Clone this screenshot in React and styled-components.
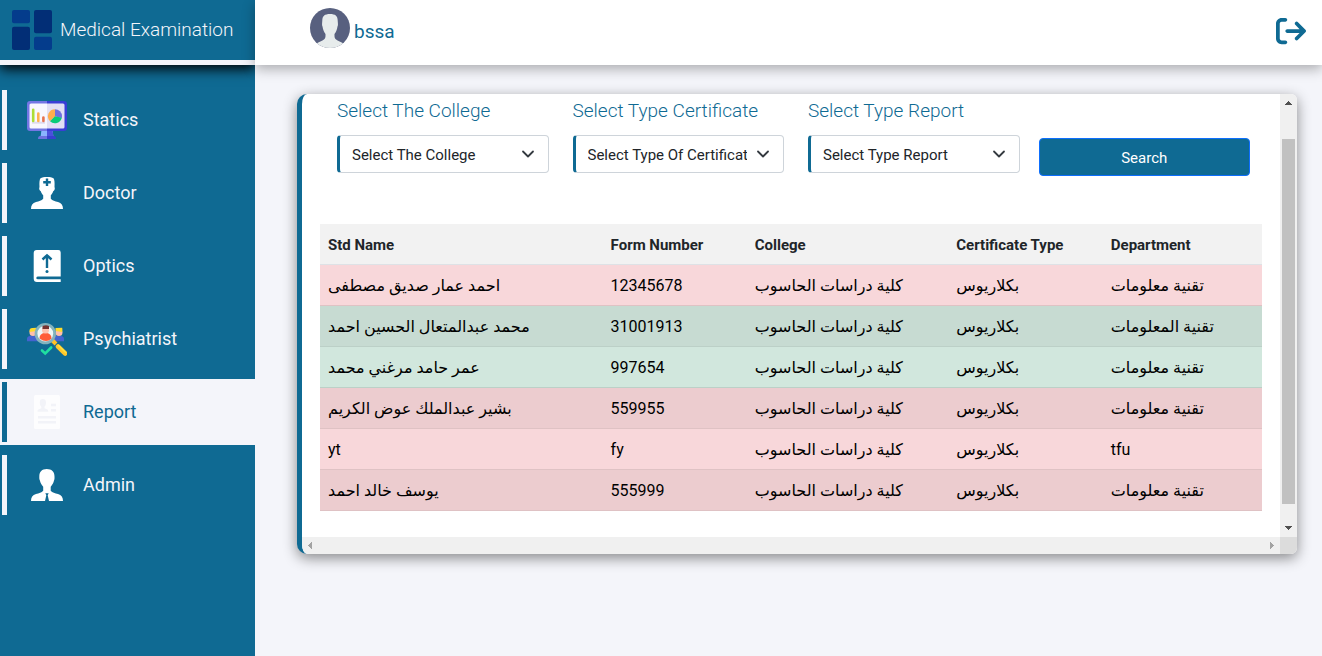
import React from "react";
import styled, { createGlobalStyle } from "styled-components";
import { FaArrowRightFromBracket } from "react-icons/fa6";

const teal = "#0f6a93";
const paper = "#f4f5fa";

const GlobalStyle = createGlobalStyle`
  *, *::before, *::after { box-sizing: border-box; }
  body {
    margin: 0;
    background: ${paper};
    color: #212529;
    font-family: Roboto, "DejaVu Sans", sans-serif;
    font-size: 16px;
    line-height: 24px;
  }
`;

const Page = styled.div`
  display: flex;
  min-height: 100vh;
`;

const Sidebar = styled.aside`
  flex: 0 0 255px;
  background: ${teal};
  overflow: hidden;
`;

const Brand = styled.a`
  display: flex;
  align-items: center;
  gap: 8px;
  height: 65px;
  padding-left: 12px;
  border-bottom: 5px solid ${paper};
  box-shadow: 0 4px 12px #000;
  color: ${paper};
  font-size: 19px;
  font-weight: 300;
  text-decoration: none;
  white-space: nowrap;
`;

const NavList = styled.ul`
  display: flex;
  flex-direction: column;
  gap: 7px;
  margin: 0;
  padding: 22px 0 0;
  list-style: none;
`;

const NavItem = styled.li`
  padding: 3px 0 3px 2px;
  background: ${(p) => (p.$active ? paper : "transparent")};
`;

const NavLink = styled.a`
  display: flex;
  align-items: center;
  gap: 16px;
  height: 60px;
  padding-left: 20px;
  border-left: 5px solid ${(p) => (p.$active ? teal : paper)};
  color: ${(p) => (p.$active ? teal : paper)};
  font-size: 18px;
  text-decoration: none;
`;

const Content = styled.div`
  flex: 1;
  min-width: 0;
`;

const TopBar = styled.header`
  display: flex;
  justify-content: space-between;
  align-items: center;
  height: 65px;
  padding: 0 16px 4px 55px;
  background: #fff;
  box-shadow: 0 4px 12px rgba(0, 0, 0, 0.3);
`;

const User = styled.div`
  display: flex;
  align-items: flex-end;
  gap: 4px;
  padding-bottom: 6px;
  color: ${teal};
  font-size: 19px;
`;

const UserName = styled.span`
  line-height: 32px;
`;

const LogoutButton = styled.button`
  display: flex;
  padding: 0;
  border: 0;
  background: none;
  color: ${teal};
  font-size: 30px;
  cursor: pointer;
`;

const Main = styled.main`
  padding: 29px 25px 40px 42px;
`;

const Card = styled.section`
  display: grid;
  grid-template-columns: minmax(0, 1fr) 17px;
  grid-template-rows: auto 17px;
  border-left: 5px solid ${teal};
  border-radius: 10px 6px 6px 10px;
  background: #fff;
  box-shadow: 0 4px 14px rgba(0, 0, 0, 0.45);
  overflow: hidden;
`;

const CardBody = styled.div`
  padding: 5px 18px 26px;
`;

const Filters = styled.form`
  display: grid;
  grid-template-columns: repeat(4, minmax(0, 1fr));
  align-items: end;
  margin-bottom: 51px;
`;

const Field = styled.div`
  padding: 0 7px 0 17px;
`;

const FieldLabel = styled.label`
  display: block;
  margin-bottom: 12px;
  color: ${teal};
  font-size: 19px;
  font-weight: 300;
  line-height: 24px;
  white-space: nowrap;
`;

const SelectBox = styled.div`
  display: grid;
  align-items: center;
`;

const Select = styled.select`
  grid-area: 1 / 1;
  width: 100%;
  height: 38px;
  padding: 2px 36px 0 12px;
  border: 1px solid #ced4da;
  border-left: 3px solid ${teal};
  border-radius: 4px;
  background: #fff;
  color: #212529;
  font: inherit;
  font-size: 15px;
  appearance: none;
`;

const Chevron = styled.svg`
  grid-area: 1 / 1;
  justify-self: end;
  width: 16px;
  height: 12px;
  margin-right: 13px;
  pointer-events: none;
`;

const ButtonField = styled.div`
  padding: 0 12px;
  margin-bottom: -3px;
`;

const SearchButton = styled.button`
  width: 100%;
  height: 38px;
  padding: 2px 0 0;
  border: 1px solid #0d6efd;
  border-radius: 4px;
  background: ${teal};
  color: #fff;
  font: inherit;
  font-size: 15px;
  cursor: pointer;
`;

const Table = styled.table`
  width: 100%;
  border-collapse: collapse;
  table-layout: fixed;
`;

const HeadCell = styled.th`
  width: ${(p) => p.$width};
  height: 40px;
  padding: 2px 8px 0;
  border-bottom: 1px solid #dee2e6;
  background: #f2f2f2;
  font-size: 15px;
  font-weight: 700;
  text-align: left;
  white-space: nowrap;
`;

const tones = {
  danger: { odd: "#f8d7da", even: "#eccccf", line: "#dfc2c4" },
  success: { odd: "#d1e7dd", even: "#c7dbd2", line: "#bcd0c7" },
};

const Row = styled.tr`
  background: ${(p) => tones[p.$tone].odd};
  color: #000;
  &:nth-child(even) { background: ${(p) => tones[p.$tone].even}; }
  td { border-bottom: 1px solid ${(p) => tones[p.$tone].line}; }
`;

const Cell = styled.td`
  height: 41px;
  padding: 2px 8px 0;
  font-size: 16px;
  white-space: nowrap;
`;

const ScrollTrack = styled.div`
  display: flex;
  flex-direction: ${(p) => (p.$vertical ? "column" : "row")};
  justify-content: space-between;
  align-items: center;
  padding: ${(p) => (p.$vertical ? "7px 0" : "0 6px")};
  background: #f0f0f0;
`;

const ScrollThumb = styled.div`
  flex: 1;
  width: 13px;
  margin: 34px 0 22px;
  background: #c1c1c1;
`;

const ScrollCorner = styled.div`
  background: #dcdcdc;
`;

function Arrow({ points, color, width, height }) {
  return (
    <svg width={width} height={height} viewBox={`0 0 ${width} ${height}`} aria-hidden="true" shapeRendering="crispEdges">
      <polygon points={points} fill={color} />
    </svg>
  );
}

function Icon({ children }) {
  return (
    <svg width="40" height="40" viewBox="0 0 40 40" fill="none" aria-hidden="true">
      {children}
    </svg>
  );
}

const Logo = () => (
  <Icon>
    <rect width="18" height="13.3" rx="2" fill="#043c8c" />
    <rect x="22" width="18" height="23.3" rx="2" fill="#022e76" />
    <rect y="16.7" width="18" height="23.3" rx="2" fill="#022e76" />
    <rect x="22" y="26.7" width="18" height="13.3" rx="2" fill="#043c8c" />
  </Icon>
);

const Avatar = () => (
  <Icon>
    <defs>
      <clipPath id="avatar"><circle cx="20" cy="20" r="20" /></clipPath>
    </defs>
    <g clipPath="url(#avatar)">
      <rect width="40" height="40" fill="#58607f" />
      <path fill="#e7ecec" d="M20 6c-5.200 0-7.700 2-7.700 6.500 0 2-.7 4 .2 6 .5 3.500 1.500 5.500 3 7.500 0 2 .2 3.500-1 5-1.800 2-5 2.500-8 4.500V42h27v-6.500c-3-2-6.200-2.500-8-4.500-1.200-1.500-1-3-1-5 1.500-2 2.500-4 3-7.500.9-2 .2-4 .2-6C27.700 8 25.200 6 20 6z" />
    </g>
  </Icon>
);

const StaticsIcon = () => (
  <Icon>
    <path d="M14.500 30h11l1 7h-13z" fill="#8ab4ff" />
    <path d="M20 30h5.500l1 7H20z" fill="#4b50dc" />
    <path d="M13 36h7v3h-9q0-3 2-3z" fill="#6d72e0" />
    <path d="M20 36h7q2 0 2 3h-9z" fill="#3940cf" />
    <path d="M20 1H3Q0 1 0 4v24q0 3 3 3h17z" fill="#7476e4" />
    <path d="M20 1h17q3 0 3 3v24q0 3-3 3H20z" fill="#3a3ed6" />
    <path d="M20 3.500H4q-1.500 0-1.500 1.500v22q0 1.500 1.500 1.500h16z" fill="#f8f7ff" />
    <path d="M20 3.500h16q1.500 0 1.500 1.500v22q0 1.500-1.500 1.500H20z" fill="#e2dff4" />
    <path d="M5 22.700h13" stroke="#dedaf0" strokeWidth="2" />
    <path d="M6.200 9.800V21" stroke="#addd35" strokeWidth="2.600" strokeLinecap="round" />
    <path d="M11.300 13.500V21" stroke="#ffb04f" strokeWidth="2.600" strokeLinecap="round" />
    <path d="M16.400 17.500V21" stroke="#e77350" strokeWidth="2.600" strokeLinecap="round" />
    <path d="M28 16.300V9.300a7 7 0 0 0-5 11.900z" fill="#ffad4d" />
    <path d="M28 16.300V9.300a7 7 0 0 1 7 7 7 7 0 0 1-.4 2z" fill="#6f70dd" />
    <path d="m28 16.300-5 4.900a7 7 0 0 0 11.800-3.500z" fill="#08cb78" />
  </Icon>
);

const DoctorIcon = () => (
  <Icon>
    <path fill="#fff" d="M20 4c3 0 5 .3 6.500 1.300 1 1.500 1.300 4 1 8.700.8 1.600 0 3.500-1.300 4.200-.5 1.600-1.500 3-2.400 4v3.600c1.600 2 4.200 2.300 7.200 3.300 3.500 1.200 5 3.400 5 6.900H4c0-3.500 1.500-5.700 5-6.900 3-1 5.600-1.300 7.200-3.300v-3.600c-.9-1-1.900-2.400-2.400-4-1.300-.7-2.100-2.600-1.300-4.200-.3-4.700 0-7.200 1-8.700C15 4.300 17 4 20 4z" />
    <path d="M20 5.500v7.500M16.200 9.300h7.600" stroke={teal} strokeWidth="2.400" />
  </Icon>
);

const OpticsIcon = () => (
  <Icon>
    <path fill="#fff" d="M9.700 4h21.600q2.400 0 2.400 2.400v24.200H11q-1.500 0-1.500 1.400t1.500 1.300h22.700V36H10q-3.300 0-3.300-3.500V7q0-3 3-3z" />
    <path d="M10.500 32h23.200" stroke={teal} strokeWidth="2" strokeLinecap="round" />
    <path d="M20 22V9.500M15.500 13.500 20 9.300l4.500 4.200" stroke={teal} strokeWidth="2.400" />
    <circle cx="20" cy="25.600" r="1.500" fill={teal} />
  </Icon>
);

const PsychiatristIcon = () => (
  <Icon>
    <path d="M0 22.300v-2.500q0-3 5-3h7v5.500zM26 22.300v-5.500h6q5 0 5 3v2.500z" fill="#4463cf" />
    <circle cx="6" cy="13.500" r="3.500" fill="#ffc0ad" />
    <circle cx="32" cy="13.500" r="3.500" fill="#ffc0ad" />
    <path d="M2.500 13q-.6-3.800 3-4l4-.3V12zM28.500 9l6.700-.2q.5 2-.1 4.200l-6.600-1z" fill="#ffdb2d" />
    <path d="m25 21 4 4" stroke="#ffc225" strokeWidth="4" />
    <circle cx="18.300" cy="14.600" r="9.300" fill="#edf7f8" stroke="#83b3bd" strokeWidth="2.800" />
    <path d="M12.500 19.500q0-5.500 6-5.500t6 5.500q-5 5-12 0z" fill="#ff5c38" />
    <circle cx="18.500" cy="11" r="3.500" fill="#ffc1ae" />
    <path d="M15.500 10V7q3.500-1.500 6.500 0v3z" fill="#743331" />
    <path d="m31 27.500 7.200 7" stroke="#ffc72c" strokeWidth="4.600" strokeLinecap="round" />
    <path d="m31.500 26.500 7.200 7" stroke="#ffe23f" strokeWidth="1.500" strokeLinecap="round" />
    <path d="m15 31.500 3.200 3 6-6" stroke="#20dfa0" strokeWidth="2.600" strokeLinecap="round" />
  </Icon>
);

const ReportIcon = () => (
  <Icon>
    <rect x="7" y="3" width="26" height="34" rx="1.500" fill="#fdfdfe" />
    <path fill="#f2f3f8" d="M15.700 7c2.300 0 3.300 1 3.300 3.700 0 2-.8 3.300-1.500 4v1.600c1.200.8 3.800.6 3.800 3.400H10.500c0-2.800 2.600-2.600 3.800-3.400v-1.600c-.7-.7-1.500-2-1.500-4C12.800 8 13.600 7 15.700 7z" />
    <path d="M24 13h5M24 18.200h5M11 25.300h18M11 30.300h18" stroke="#f2f3f8" strokeWidth="2.400" />
  </Icon>
);

const AdminIcon = () => (
  <Icon>
    <path fill="#fff" d="M19.700 4c5 0 7.800 2.700 7.800 7.500 0 1.400.2 2.600-.5 4-.5 2.400-1.600 4.500-3.300 6.200v4.100c1.600 2 4.300 2.300 7.300 3.300 3.500 1.200 5 3.400 5 6.900H4c0-3.500 1.500-5.700 5-6.900 3-1 5.600-1.300 7.200-3.300v-4.100c-1.700-1.700-2.800-3.800-3.300-6.200-.7-1.400-.6-2.600-.6-4C12.300 6.700 15 4 19.700 4z" />
    <path d="M18.300 28.300h3.400l-1 1.900 1.300 5.800h-4l1.300-5.800z" fill={teal} />
  </Icon>
);

const navItems = [
  { label: "Statics", Glyph: StaticsIcon },
  { label: "Doctor", Glyph: DoctorIcon },
  { label: "Optics", Glyph: OpticsIcon },
  { label: "Psychiatrist", Glyph: PsychiatristIcon },
  { label: "Report", Glyph: ReportIcon, active: true },
  { label: "Admin", Glyph: AdminIcon },
];

const filters = [
  { id: "college", label: "Select The College", option: "Select The College" },
  { id: "certificate", label: "Select Type Certificate", option: "Select Type Of Certificate" },
  { id: "report", label: "Select Type Report", option: "Select Type Report" },
];

const columns = [
  { title: "Std Name", width: "30%" },
  { title: "Form Number", width: "15.3%" },
  { title: "College", width: "21.4%" },
  { title: "Certificate Type", width: "16.4%" },
  { title: "Department", width: "16.9%" },
];

const college = "كلية دراسات الحاسوب";
const degree = "بكلاريوس";

const students = [
  { tone: "danger", cells: ["احمد عمار صديق مصطفى", "12345678", college, degree, "تقنية معلومات"] },
  { tone: "success", cells: ["محمد عبدالمتعال الحسين احمد", "31001913", college, degree, "تقنية المعلومات"] },
  { tone: "success", cells: ["عمر حامد مرغني محمد", "997654", college, degree, "تقنية معلومات"] },
  { tone: "danger", cells: ["بشير عبدالملك عوض الكريم", "559955", college, degree, "تقنية معلومات"] },
  { tone: "danger", cells: ["yt", "fy", college, degree, "tfu"] },
  { tone: "danger", cells: ["يوسف خالد احمد", "555999", college, degree, "تقنية معلومات"] },
];

export default function App() {
  return (
    <>
      <GlobalStyle />
      <Page>
        <Sidebar>
          <Brand href="#home">
            <Logo />
            Medical Examination
          </Brand>
          <nav>
            <NavList>
              {navItems.map(({ label, Glyph, active }) => (
                <NavItem key={label} $active={active}>
                  <NavLink href={`#${label.toLowerCase()}`} $active={active} aria-current={active ? "page" : undefined}>
                    <Glyph />
                    {label}
                  </NavLink>
                </NavItem>
              ))}
            </NavList>
          </nav>
        </Sidebar>
        <Content>
          <TopBar>
            <User>
              <Avatar />
              <UserName>bssa</UserName>
            </User>
            <LogoutButton type="button" aria-label="Log out">
              <FaArrowRightFromBracket />
            </LogoutButton>
          </TopBar>
          <Main>
            <Card>
              <CardBody>
                <Filters onSubmit={(e) => e.preventDefault()}>
                  {filters.map(({ id, label, option }) => (
                    <Field key={id}>
                      <FieldLabel htmlFor={id}>{label}</FieldLabel>
                      <SelectBox>
                        <Select id={id}>
                          <option>{option}</option>
                        </Select>
                        <Chevron viewBox="0 0 16 12" fill="none" aria-hidden="true">
                          <path d="m3 3.500 5 5 5-5" stroke="#343a40" strokeWidth="1.800" strokeLinecap="round" strokeLinejoin="round" />
                        </Chevron>
                      </SelectBox>
                    </Field>
                  ))}
                  <ButtonField>
                    <SearchButton type="submit">Search</SearchButton>
                  </ButtonField>
                </Filters>
                <Table>
                  <thead>
                    <tr>
                      {columns.map(({ title, width }) => (
                        <HeadCell key={title} $width={width} scope="col">{title}</HeadCell>
                      ))}
                    </tr>
                  </thead>
                  <tbody>
                    {students.map(({ tone, cells }) => (
                      <Row key={cells[0]} $tone={tone}>
                        {cells.map((text, i) => (
                          <Cell key={i}>{text}</Cell>
                        ))}
                      </Row>
                    ))}
                  </tbody>
                </Table>
              </CardBody>
              <ScrollTrack $vertical>
                <Arrow width={7} height={4} points="0,4 3.500,0 7,4" color="#505050" />
                <ScrollThumb />
                <Arrow width={7} height={4} points="0,0 3.500,4 7,0" color="#505050" />
              </ScrollTrack>
              <ScrollTrack>
                <Arrow width={4} height={7} points="4,0 0,3.500 4,7" color="#a3a3a3" />
                <Arrow width={4} height={7} points="0,0 4,3.500 0,7" color="#a3a3a3" />
              </ScrollTrack>
              <ScrollCorner />
            </Card>
          </Main>
        </Content>
      </Page>
    </>
  );
}
